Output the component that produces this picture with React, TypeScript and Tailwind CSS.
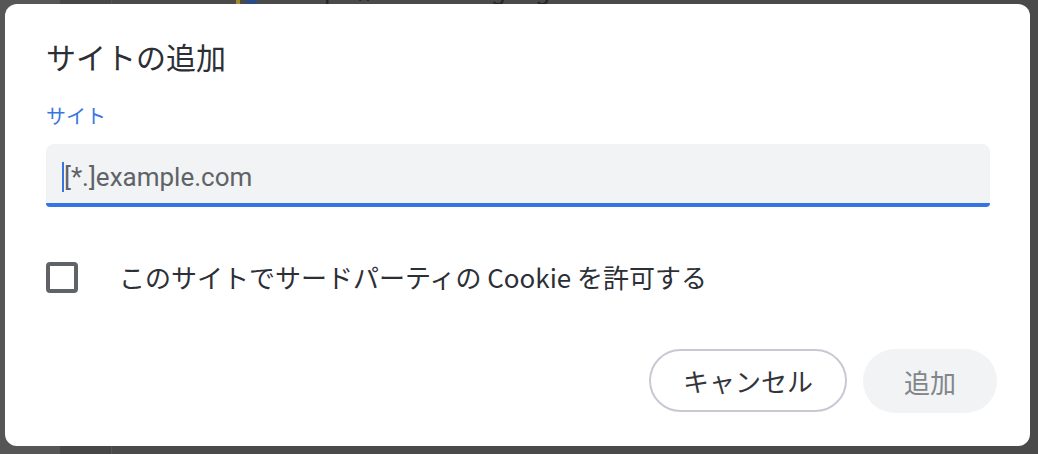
export default function App() {
  const sans = '"Noto Sans CJK JP", "Noto Sans", sans-serif';
  const latin = 'Roboto, "Noto Sans CJK JP", sans-serif';

  return (
    <div
      className="relative h-[454px] w-[1038px] overflow-hidden bg-[#4a4a4a]"
      style={{ fontFamily: sans }}
    >
      {/* dimmed settings page underneath */}
      <div className="flex h-full">
        <div className="h-full w-[60px] bg-[#565656]" />
        <div className="h-full w-[52px] border-r border-[#555] bg-[#474747]" />
        <div className="flex flex-1 flex-col">
          <div className="-mt-[25px] flex items-end gap-[36px] pl-[124px]">
            <div className="flex items-end gap-[6px]">
              <span className="h-[8px] w-[4px] bg-[#a08a2c]" />
              <span className="h-[8px] w-[11px] rounded-[1px] bg-[#2b4a86]" />
            </div>
            <span className="text-[26px] leading-[32px] text-[#262626]" style={{ fontFamily: latin }}>
              https://accounts.google.com
            </span>
          </div>
        </div>
      </div>

      {/* dialog */}
      <div className="absolute left-[5px] top-[4px] flex h-[442px] w-[1025px] flex-col rounded-[12px] bg-white pl-[41px] pr-[40px]">
        <h1 className="mt-[32px] text-[30px] leading-[40px] font-normal text-[#2d2f36]">サイトの追加</h1>

        <label className="mt-[26px] text-[20px] leading-[28px] text-[#3a76de]">サイト</label>
        <div className="mt-[14px] flex h-[63px] w-[944px] items-center rounded-t-[8px] rounded-b-[4px] border-b-[4px] border-[#3574e3] bg-[#f1f3f4] pl-[16px] pt-[6px]">
          <span className="h-[30px] w-[2px] bg-[#3574e3]" />
          <span className="text-[26px] leading-[32px] text-[#5f6368]" style={{ fontFamily: latin }}>
            [*.]example.com
          </span>
        </div>

        <div className="mt-[54px] flex items-center">
          <span className="h-[31px] w-[32px] rounded-[4px] border-[4px] border-[#5f6368]" />
          <span className="ml-[41px] text-[26px] leading-[32px] text-[#2d2f36]">
            このサイトでサードパーティの Cookie を許可する
          </span>
        </div>

        <div className="mt-[56px] flex justify-end gap-[16px]">
          <button className="h-[63px] w-[198px] rounded-full border-[2px] border-[#c7cad4] bg-white text-[26px] text-[#33353b]">
            キャンセル
          </button>
          <button className="mr-[-7px] h-[64px] w-[134px] rounded-full bg-[#f1f3f4] text-[26px] text-[#80868b]">
            追加
          </button>
        </div>
      </div>
    </div>
  );
}
